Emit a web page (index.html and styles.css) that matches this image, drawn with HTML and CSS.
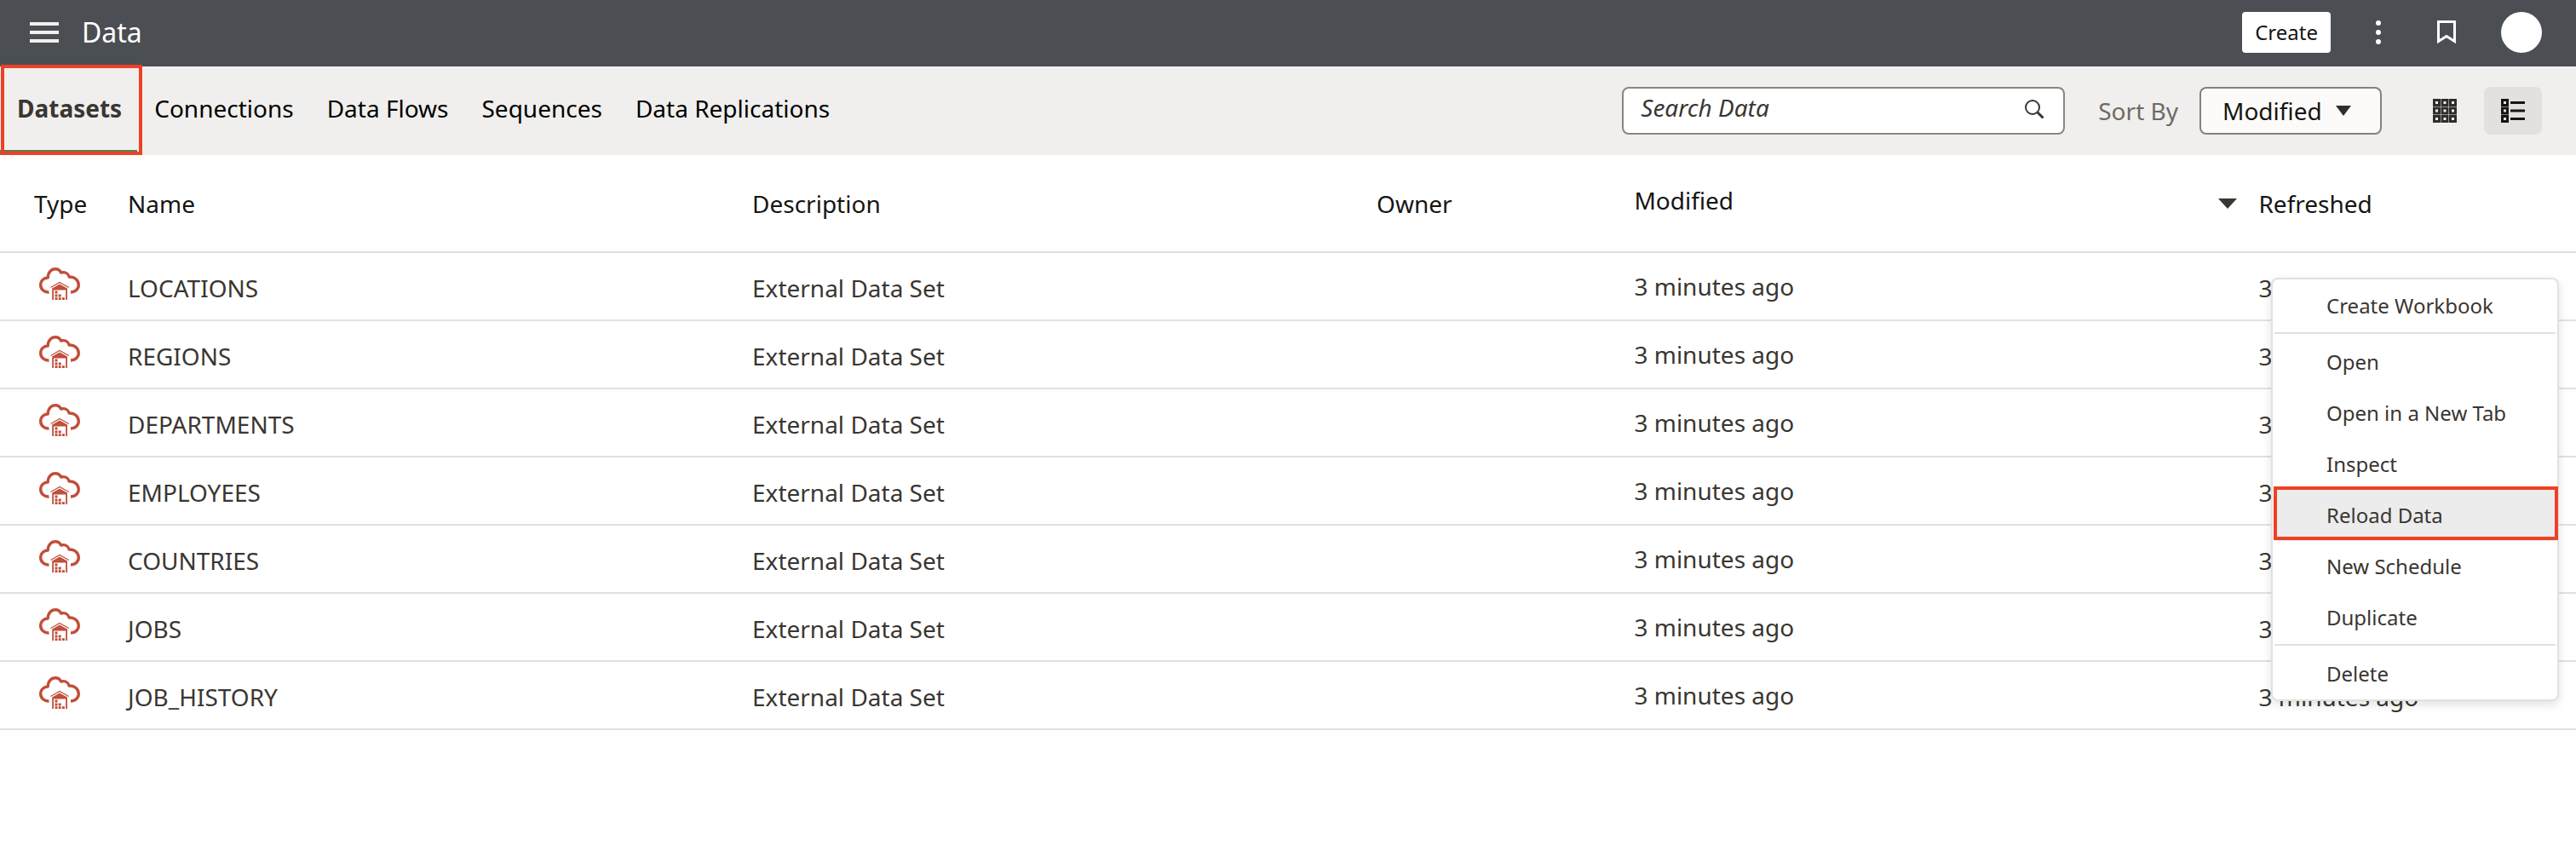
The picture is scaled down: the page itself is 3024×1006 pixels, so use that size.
FILE: index.html
```html
<!DOCTYPE html>
<html lang="en">
<head>
<meta charset="utf-8">
<title>Data</title>
<link rel="stylesheet" href="styles.css">
</head>
<body>
<svg class="sprite" aria-hidden="true">
  <symbol id="cloud" viewBox="0 0 48 38">
    <path d="M11.500 29C6 29.500 1.700 25.500 1.700 20.500C1.700 15.500 5.500 12 10.200 12C10.200 6 14 1.700 19 1.700C22 1.700 24.500 3.500 25.700 6C30 5 34 7 35.200 11C41.500 10.500 46.300 15 46.300 20.500C46.300 25.500 42 29 37 29" fill="none" stroke="#c04f3b" stroke-width="3.400" stroke-linejoin="round"/>
    <path d="M13.500 23.500L24 17.500L34.800 23.500" fill="none" stroke="#c04f3b" stroke-width="1.200"/>
    <path d="M24 19.500L33 24.500V38H31.200V26.500H17V38H15.200V24.500Z M18.500 27.500h3v3h-3z M18.500 31.400h3v3h-3z M18.500 35.200h3v2.800h-3z M22.700 31.400h3v3h-3z M22.700 35.200h3v2.800h-3z M26.900 35.200h3v2.800h-3z" fill="#c04f3b"/>
  </symbol>
</svg>

<header class="topbar">
  <button class="icon-button menu-toggle" aria-label="Navigation menu">
    <svg width="34" height="24"><path d="M0 2H34M0 12H34M0 22H34" stroke="#f0f0ee" stroke-width="4"/></svg>
  </button>
  <h1 class="title">Data</h1>
  <button class="create">Create</button>
  <button class="icon-button more" aria-label="More">
    <svg width="6" height="28"><circle cx="3" cy="3" r="3" fill="#fff"/><circle cx="3" cy="14" r="3" fill="#fff"/><circle cx="3" cy="25" r="3" fill="#fff"/></svg>
  </button>
  <button class="icon-button bookmark" aria-label="Bookmarks">
    <svg width="22" height="28"><path d="M1.500 1.500H20.500V24.500L11 18.500L1.500 24.500Z" fill="none" stroke="#fff" stroke-width="3"/></svg>
  </button>
  <button class="avatar" aria-label="Profile"></button>
</header>

<div class="toolbar">
  <nav class="tabs">
    <a class="tab tab-active" href="#datasets">Datasets</a>
    <a class="tab" href="#connections">Connections</a>
    <a class="tab" href="#flows">Data Flows</a>
    <a class="tab" href="#sequences">Sequences</a>
    <a class="tab" href="#replications">Data Replications</a>
  </nav>
  <div class="search">
    <input class="search-input" type="search" placeholder="Search Data" aria-label="Search Data">
    <svg class="search-icon" width="24" height="24"><circle cx="10" cy="10" r="8" fill="none" stroke="#3a3631" stroke-width="2"/><path d="M15.500 15.500L22.500 22.500" stroke="#3a3631" stroke-width="3"/></svg>
  </div>
  <label class="sort-label" for="sort">Sort By</label>
  <div class="sort">
    <select class="sort-select" id="sort"><option>Modified</option><option>Name</option></select>
    <svg class="sort-caret" width="18" height="12"><path d="M0 0H18L9 12Z" fill="#302e2b"/></svg>
  </div>
  <div class="views">
    <button class="view" aria-label="Grid view">
      <svg width="28" height="28"><g fill="none" stroke="#2e2d2a" stroke-width="3"><path d="M1.500 1.500h6v6h-6zM11 1.500h6v6h-6zM20.500 1.500h6v6h-6zM1.500 11h6v6h-6zM11 11h6v6h-6zM20.500 11h6v6h-6zM1.500 20.500h6v6h-6zM11 20.500h6v6h-6zM20.500 20.500h6v6h-6z"/></g></svg>
    </button>
    <button class="view view-active" aria-label="List view">
      <svg width="28" height="28"><g fill="none" stroke="#161513" stroke-width="3"><path d="M1.500 1.500h6v6h-6zM1.500 11h6v6h-6zM1.500 20.500h6v6h-6zM11 4.500H28M11 14H28M11 23.500H28"/></g></svg>
    </button>
  </div>
</div>

<main class="content">
  <table class="datasets">
    <colgroup><col class="col-type"><col class="col-wide"><col class="col-wide"><col class="col-owner"><col class="col-wide"><col></colgroup>
    <thead>
      <tr>
        <th class="type" scope="col">Type</th>
        <th scope="col">Name</th>
        <th scope="col">Description</th>
        <th scope="col">Owner</th>
        <th scope="col" aria-sort="descending"><div class="sorted"><span class="sorted-label">Modified</span><svg width="22" height="12"><path d="M0 0H22L11 12Z" fill="#3a3631"/></svg></div></th>
        <th scope="col">Refreshed</th>
      </tr>
    </thead>
    <tbody>
      <tr><td class="icon"><svg width="48" height="38"><use href="#cloud"/></svg></td><td>LOCATIONS</td><td>External Data Set</td><td></td><td class="modified">3 minutes ago</td><td>3 minutes ago</td></tr>
      <tr><td class="icon"><svg width="48" height="38"><use href="#cloud"/></svg></td><td>REGIONS</td><td>External Data Set</td><td></td><td class="modified">3 minutes ago</td><td>3 minutes ago</td></tr>
      <tr><td class="icon"><svg width="48" height="38"><use href="#cloud"/></svg></td><td>DEPARTMENTS</td><td>External Data Set</td><td></td><td class="modified">3 minutes ago</td><td>3 minutes ago</td></tr>
      <tr><td class="icon"><svg width="48" height="38"><use href="#cloud"/></svg></td><td>EMPLOYEES</td><td>External Data Set</td><td></td><td class="modified">3 minutes ago</td><td>3 minutes ago</td></tr>
      <tr><td class="icon"><svg width="48" height="38"><use href="#cloud"/></svg></td><td>COUNTRIES</td><td>External Data Set</td><td></td><td class="modified">3 minutes ago</td><td>3 minutes ago</td></tr>
      <tr><td class="icon"><svg width="48" height="38"><use href="#cloud"/></svg></td><td>JOBS</td><td>External Data Set</td><td></td><td class="modified">3 minutes ago</td><td>3 minutes ago</td></tr>
      <tr><td class="icon"><svg width="48" height="38"><use href="#cloud"/></svg></td><td>JOB_HISTORY</td><td>External Data Set</td><td></td><td class="modified">3 minutes ago</td><td>3 minutes ago</td></tr>
    </tbody>
  </table>

  <div class="menu" role="menu">
    <button class="item" role="menuitem">Create Workbook</button>
    <hr class="divider">
    <button class="item" role="menuitem">Open</button>
    <button class="item" role="menuitem">Open in a New Tab</button>
    <button class="item" role="menuitem">Inspect</button>
    <button class="item item-active" role="menuitem">Reload Data</button>
    <button class="item" role="menuitem">New Schedule</button>
    <button class="item" role="menuitem">Duplicate</button>
    <hr class="divider">
    <button class="item" role="menuitem">Delete</button>
  </div>
</main>
</body>
</html>
```
FILE: styles.css
```css
* { box-sizing: border-box; }

body {
  margin: 0;
  background: #fff;
  color: #3a3631;
  font-family: "Noto Sans", sans-serif;
  font-size: 28px;
  line-height: 40px;
}

button, input, select {
  margin: 0;
  padding: 0;
  border: 0;
  background: none;
  color: inherit;
  font: inherit;
}

svg { display: block; }
.sprite { position: absolute; width: 0; height: 0; }

/* Top bar */
.topbar {
  display: flex;
  align-items: center;
  height: 78px;
  padding: 0 40px 2px 35px;
  background: #4b4e53;
  color: #fff;
}
.title {
  margin: 0 auto 0 27px;
  font-size: 32px;
  font-weight: 400;
}
.create {
  height: 48px;
  padding: 0 15px;
  border-radius: 4px;
  background: #fff;
  color: #161513;
  font-size: 24px;
}
.more { margin-left: 53px; }
.bookmark { margin-left: 66px; }
.avatar {
  width: 48px;
  height: 48px;
  margin-left: 53px;
  border-radius: 50%;
  background: #fff;
}

/* Toolbar */
.toolbar {
  display: flex;
  align-items: center;
  height: 104px;
  padding-right: 40px;
  background: #f0efed;
}
.tabs {
  display: flex;
  align-self: stretch;
  margin-right: auto;
}
.tab {
  display: flex;
  align-items: center;
  padding: 0 19px 6px 20px;
  color: #000;
  text-decoration: none;
  white-space: nowrap;
}
.tab-active {
  position: relative;
  border-bottom: 6px solid #5c7f4e;
  padding: 0 18px 0 20px;
  color: #3a3631;
  font-weight: 700;
}
.tab-active::after {
  content: "";
  position: absolute;
  inset: -2px -6px -6px 1px;
  border: 4px solid #ed4127;
}
.search {
  display: flex;
  align-items: center;
  flex: 0 1 520px;
  height: 56px;
  padding: 0 22px 4px 20px;
  border: 2px solid #8b8580;
  border-radius: 8px;
  background: #fff;
}
.search-input {
  flex: 1;
  min-width: 0;
  height: 44px;
  padding-bottom: 4px;
  outline: 0;
}
.search-input::placeholder {
  color: #3a3631;
  font-style: italic;
  opacity: 1;
}
.search-icon { flex: none; }
.sort-label {
  margin: 0 25px 0 39px;
  color: #6f6964;
  white-space: nowrap;
}
.sort {
  display: grid;
  align-items: center;
  width: 214px;
  height: 56px;
  border: 2px solid #85827b;
  border-radius: 8px;
  background: #fcfbfa;
  color: #161513;
}
.sort-select {
  grid-area: 1 / 1;
  width: 100%;
  height: 52px;
  padding-left: 25px;
  appearance: none;
  outline: 0;
}
.sort-caret {
  grid-area: 1 / 1;
  justify-self: end;
  margin-right: 34px;
  pointer-events: none;
}
.views {
  display: flex;
  gap: 12px;
  margin-left: 40px;
}
.view {
  display: grid;
  place-items: center;
  width: 68px;
  height: 56px;
  border-radius: 8px;
}
.view-active { background: #e2e1de; }

/* Dataset list */
.content { position: relative; }
.datasets {
  width: 100%;
  table-layout: fixed;
  border-collapse: separate;
  border-spacing: 0;
}
.col-type { width: 150px; }
.col-wide { width: 24.24%; }
.col-owner { width: 10%; }
.datasets th {
  height: 115px;
  padding: 0;
  border-bottom: 2px solid #d9dfe3;
  color: #161513;
  font-weight: 400;
  text-align: left;
}
.datasets .type { padding-left: 40px; }
.sorted {
  display: flex;
  align-items: center;
  justify-content: space-between;
  padding-right: 25px;
}
.sorted-label { padding-bottom: 8px; }
.datasets td {
  height: 80px;
  padding: 4px 0 0;
  border-bottom: 2px solid #e1e1e1;
}
.datasets .modified { padding-top: 0; }
.datasets .icon { padding: 0 0 6px 46px; }

/* Row context menu */
.menu {
  position: absolute;
  top: 144px;
  right: 20px;
  width: 338px;
  padding: 1px 2px 0;
  border: 2px solid #e1e1de;
  border-radius: 8px;
  background: #fff;
  box-shadow: 0 4px 12px rgba(0, 0, 0, 0.12);
}
.item {
  display: block;
  position: relative;
  width: 100%;
  height: 60px;
  padding-left: 61px;
  font-size: 24px;
  text-align: left;
}
.item-active { background: #ececec; }
.item-active::after {
  content: "";
  position: absolute;
  inset: -4px -3px 1px -1px;
  border: 4px solid #ed4127;
}
.divider {
  height: 2px;
  margin: 1px 0 3px;
  border: 0;
  background: #e1e1de;
}
```
